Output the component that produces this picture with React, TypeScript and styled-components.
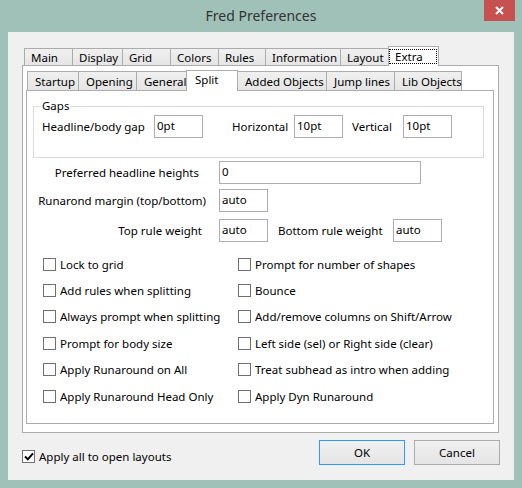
import React from 'react';
import styled, { createGlobalStyle } from 'styled-components';

const GlobalStyle = createGlobalStyle`
  html, body {
    margin: 0;
    padding: 0;
  }
  body {
    font-family: "Noto Sans", "Open Sans", "DejaVu Sans", sans-serif;
    font-size: 11.5px;
    color: #000;
  }
  * {
    box-sizing: border-box;
  }
`;

const Window = styled.div`
  width: 522px;
  height: 488px;
  background: #9fc1b8;
  display: flex;
  flex-direction: column;
`;

const TitleBar = styled.div`
  height: 32px;
  display: grid;
  grid-template-columns: 1fr auto 1fr;
`;

const Title = styled.div`
  grid-column: 2;
  align-self: center;
  font-size: 14px;
  color: #333;
  margin-top: -2px;
`;

const CloseButton = styled.div`
  grid-column: 3;
  justify-self: end;
  width: 31px;
  height: 21px;
  margin-right: 7px;
  background: #c75050;
  display: flex;
  align-items: center;
  justify-content: center;
`;

const Client = styled.div`
  flex: 1;
  margin: 0 8px 8px;
  background: #f0f0f0;
  padding: 14px 15px 0 14px;
  display: flex;
  flex-direction: column;
`;

const TabStrip = styled.div<{ $h: number; $pl: number }>`
  height: ${p => p.$h}px;
  padding-left: ${p => p.$pl}px;
  display: flex;
  align-items: flex-end;
`;

const Tab = styled.div<{ $w: number; $h: number; $pl: number }>`
  width: ${p => p.$w}px;
  height: ${p => p.$h}px;
  padding-left: ${p => p.$pl}px;
  margin-left: -1px;
  border: 1px solid #acacac;
  border-bottom: none;
  background: linear-gradient(#f0f0f0, #e5e5e5);
  display: flex;
  align-items: center;
  white-space: nowrap;
  flex-shrink: 0;
  &:first-child {
    margin-left: 0;
  }
`;

const ActiveTab = styled(Tab)`
  position: relative;
  z-index: 2;
  margin-bottom: -1px;
  background: #fff;
  align-items: flex-start;
  padding-top: 1px;
`;

const FocusLabel = styled.span`
  display: flex;
  align-items: center;
  width: 48px;
  height: 15px;
  margin: 1px 0 0 -1px;
  padding-left: 5px;
  border: 1px dotted #000;
`;

const OuterPanel = styled.div`
  height: 368px;
  border: 1px solid #acacac;
  background: #fff;
  padding: 4px 4px 8px 3px;
`;

const InnerPanel = styled.div`
  height: 334px;
  border: 1px solid #acacac;
  background: #fff;
  padding: 0 9px 0 6px;
  display: flex;
  flex-direction: column;
`;

const GroupBox = styled.div`
  position: relative;
  margin-top: 15px;
  height: 52px;
  border: 1px solid #dcdcdc;
  padding: 8px 0 0 8px;
`;

const Legend = styled.span`
  position: absolute;
  top: -9px;
  left: 7px;
  padding: 0 1px;
  background: #fff;
`;

const GapRow = styled.div`
  display: flex;
  align-items: center;
`;

const GapLabel = styled.span<{ $w: number; $ml?: number }>`
  width: ${p => p.$w}px;
  margin-left: ${p => p.$ml ?? 0}px;
  white-space: nowrap;
  flex-shrink: 0;
`;

const Input = styled.div<{ $w?: number }>`
  width: ${p => p.$w ?? 49}px;
  height: 23px;
  flex-shrink: 0;
  border: 1px solid #abadb3;
  background: #fff;
  padding: 1px 0 0 2px;
  line-height: 18px;
`;

const FieldRow = styled.div<{ $mt: number }>`
  display: flex;
  align-items: center;
  margin-top: ${p => p.$mt}px;
`;

const FieldLabel = styled.span<{ $pad: number }>`
  width: 186px;
  flex-shrink: 0;
  text-align: right;
  padding-right: ${p => p.$pad}px;
  white-space: nowrap;
`;

const CheckGrid = styled.div`
  margin: 9px 0 0 10px;
  display: grid;
  grid-template-columns: 195px 1fr;
  grid-template-rows: repeat(6, 26.4px);
  grid-auto-flow: column;
`;

const CheckItem = styled.label`
  display: flex;
  align-items: center;
  gap: 4px;
  white-space: nowrap;
`;

const Box = styled.span`
  width: 13px;
  height: 13px;
  border: 1px solid #707070;
  background: #fff;
  flex-shrink: 0;
  display: flex;
  align-items: center;
  justify-content: center;
`;

const Footer = styled.div`
  margin: 7px -1px 0 0;
  display: flex;
  align-items: flex-start;
`;

const FooterCheck = styled(CheckItem)`
  flex: 1;
  margin-top: 9px;
`;

const Button = styled.div<{ $default?: boolean }>`
  width: 86px;
  height: 25px;
  margin-left: 9px;
  border: 1px solid ${p => (p.$default ? '#3399ff' : '#acacac')};
  background: linear-gradient(#f0f0f0, #e5e5e5);
  display: flex;
  align-items: center;
  justify-content: center;
`;

const outerTabs = [
  { label: 'Main', w: 49 },
  { label: 'Display', w: 51 },
  { label: 'Grid', w: 49 },
  { label: 'Colors', w: 49 },
  { label: 'Rules', w: 48 },
  { label: 'Information', w: 76 },
  { label: 'Layout', w: 49 },
];

const innerTabs = [
  { label: 'Startup', w: 52 },
  { label: 'Opening', w: 59 },
  { label: 'General', w: 51 },
  { label: 'Split', w: 52, active: true },
  { label: 'Added Objects', w: 90 },
  { label: 'Jump lines', w: 69 },
  { label: 'Lib Objects', w: 68 },
];

const leftChecks = [
  'Lock to grid',
  'Add rules when splitting',
  'Always prompt when splitting',
  'Prompt for body size',
  'Apply Runaround on All',
  'Apply Runaround Head Only',
];

const rightChecks = [
  'Prompt for number of shapes',
  'Bounce',
  'Add/remove columns on Shift/Arrow',
  'Left side (sel) or Right side (clear)',
  'Treat subhead as intro when adding',
  'Apply Dyn Runaround',
];

const Tick = () => (
  <svg width="10" height="9" viewBox="0 0 10 9">
    <path d="M1 4.5 L3.8 7.3 L9 1.3" fill="none" stroke="#000" strokeWidth="2" />
  </svg>
);

const Check: React.FC<{ label: string; checked?: boolean }> = ({ label, checked }) => (
  <CheckItem>
    <Box>{checked && <Tick />}</Box>
    <span>{label}</span>
  </CheckItem>
);

export default function App() {
  return (
    <>
      <GlobalStyle />
      <Window>
        <TitleBar>
          <Title>Fred Preferences</Title>
          <CloseButton>
            <svg width="9" height="9" viewBox="0 0 9 9">
              <path d="M1 1 L8 8 M8 1 L1 8" stroke="#fff" strokeWidth="2" />
            </svg>
          </CloseButton>
        </TitleBar>
        <Client>
          <TabStrip $h={19} $pl={2}>
            {outerTabs.map(t => (
              <Tab key={t.label} $w={t.w} $h={17} $pl={6}>
                {t.label}
              </Tab>
            ))}
            <ActiveTab $w={51} $h={20} $pl={1}>
              <FocusLabel>Extra</FocusLabel>
            </ActiveTab>
          </TabStrip>
          <OuterPanel>
            <TabStrip $h={20} $pl={1}>
              {innerTabs.map(t =>
                t.active ? (
                  <ActiveTab key={t.label} $w={t.w} $h={21} $pl={8}>
                    {t.label}
                  </ActiveTab>
                ) : (
                  <Tab key={t.label} $w={t.w} $h={19} $pl={7}>
                    {t.label}
                  </Tab>
                )
              )}
            </TabStrip>
            <InnerPanel>
              <GroupBox>
                <Legend>Gaps</Legend>
                <GapRow>
                  <GapLabel $w={112}>Headline/body gap</GapLabel>
                  <Input>0pt</Input>
                  <GapLabel $w={62} $ml={29}>Horizontal</GapLabel>
                  <Input>10pt</Input>
                  <GapLabel $w={51} $ml={9}>Vertical</GapLabel>
                  <Input>10pt</Input>
                </GapRow>
              </GroupBox>
              <FieldRow $mt={3}>
                <FieldLabel $pad={20}>Preferred headline heights</FieldLabel>
                <Input $w={202}>0</Input>
              </FieldRow>
              <FieldRow $mt={5}>
                <FieldLabel $pad={13}>Runarond margin (top/bottom)</FieldLabel>
                <Input>auto</Input>
              </FieldRow>
              <FieldRow $mt={7}>
                <FieldLabel $pad={17}>Top rule weight</FieldLabel>
                <Input>auto</Input>
                <GapLabel $w={115} $ml={10}>Bottom rule weight</GapLabel>
                <Input>auto</Input>
              </FieldRow>
              <CheckGrid>
                {leftChecks.map(l => (
                  <Check key={l} label={l} />
                ))}
                {rightChecks.map(l => (
                  <Check key={l} label={l} />
                ))}
              </CheckGrid>
            </InnerPanel>
          </OuterPanel>
          <Footer>
            <FooterCheck>
              <Box>
                <Tick />
              </Box>
              <span>Apply all to open layouts</span>
            </FooterCheck>
            <Button $default>OK</Button>
            <Button>Cancel</Button>
          </Footer>
        </Client>
      </Window>
    </>
  );
}
